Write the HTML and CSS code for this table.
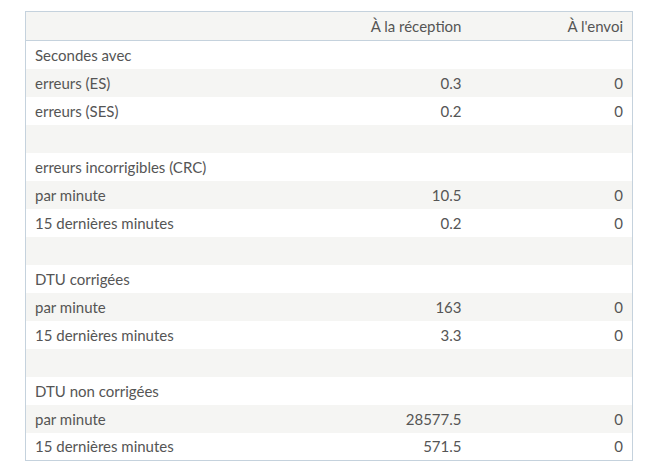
FILE: index.html
```html
<!DOCTYPE html>
<html lang="fr">
<head>
<meta charset="utf-8">
<link rel="stylesheet" href="styles.css">
</head>
<body>
<table class="stats">
  <colgroup>
    <col class="col-label">
    <col class="col-rx">
    <col class="col-tx">
  </colgroup>
  <thead>
    <tr><th class="label"></th><th class="num">À la réception</th><th class="num">À l'envoi</th></tr>
  </thead>
  <tbody>
    <tr><td class="label">Secondes avec</td><td class="num"></td><td class="num"></td></tr>
    <tr><td class="label">erreurs (ES)</td><td class="num">0.3</td><td class="num">0</td></tr>
    <tr><td class="label">erreurs (SES)</td><td class="num">0.2</td><td class="num">0</td></tr>
    <tr><td class="label">&nbsp;</td><td class="num"></td><td class="num"></td></tr>
    <tr><td class="label">erreurs incorrigibles (CRC)</td><td class="num"></td><td class="num"></td></tr>
    <tr><td class="label">par minute</td><td class="num">10.5</td><td class="num">0</td></tr>
    <tr><td class="label">15 dernières minutes</td><td class="num">0.2</td><td class="num">0</td></tr>
    <tr><td class="label">&nbsp;</td><td class="num"></td><td class="num"></td></tr>
    <tr><td class="label">DTU corrigées</td><td class="num"></td><td class="num"></td></tr>
    <tr><td class="label">par minute</td><td class="num">163</td><td class="num">0</td></tr>
    <tr><td class="label">15 dernières minutes</td><td class="num">3.3</td><td class="num">0</td></tr>
    <tr><td class="label">&nbsp;</td><td class="num"></td><td class="num"></td></tr>
    <tr><td class="label">DTU non corrigées</td><td class="num"></td><td class="num"></td></tr>
    <tr><td class="label">par minute</td><td class="num">28577.5</td><td class="num">0</td></tr>
    <tr><td class="label">15 dernières minutes</td><td class="num">571.5</td><td class="num">0</td></tr>
  </tbody>
</table>
</body>
</html>
```
FILE: styles.css
```css
html, body {
  margin: 0;
  padding: 0;
  background: #ffffff;
}
body {
  padding: 11px 0 0 25px;
  font-family: "Lato", "Open Sans", sans-serif;
  font-size: 15px;
  color: #555555;
}
.stats {
  width: 608px;
  table-layout: fixed;
  border-collapse: collapse;
  border: 1px solid #c5d2dd;
}
.col-label { width: 283px; }
.col-rx { width: 162px; }
.col-tx { width: 162px; }
.stats th, .stats td {
  height: 28px;
  padding: 0 9px;
  font-weight: normal;
  box-sizing: border-box;
  vertical-align: middle;
  white-space: nowrap;
}
.stats thead th {
  height: 29px;
  background: #f5f5f3;
  border-bottom: 1px solid #c5d2dd;
}
.stats tbody tr:nth-child(even) td {
  background: #f5f5f3;
}
.stats .label {
  text-align: left;
}
.stats .num {
  text-align: right;
}
```
